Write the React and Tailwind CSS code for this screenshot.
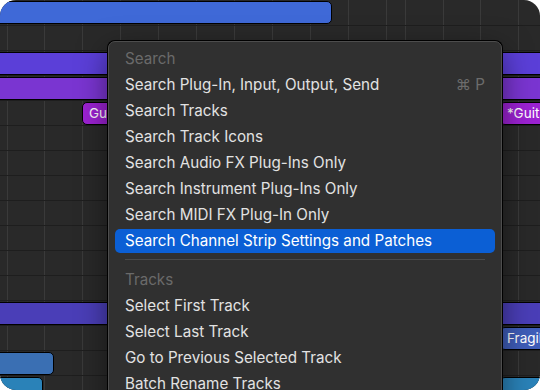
import React from "react";

const gridX = [7, 44, 82, 120, 158, 196, 234, 272, 310, 348, 386, 405, 443, 480, 518];

// regions on the timeline, one list per track row (25px each)
const rows = [
  [{ left: -12, width: 344, color: "bg-[#3f69d7]" }],
  [],
  [{ left: -12, width: 570, color: "bg-[#5b3fd8]" }],
  [{ left: -12, width: 570, color: "bg-[#7a35d1]" }],
  [
    { left: 82, width: 410, color: "bg-[#9c22d2]", label: "Guitar" },
    { left: 500, width: 80, color: "bg-[#9c22d2]", label: "*Guitar" },
  ],
  [],
  [],
  [],
  [],
  [],
  [],
  [],
  [{ left: -12, width: 570, color: "bg-[#4a3eb7]" }],
  [{ left: 500, width: 80, color: "bg-[#3f5db9]", label: "Fragile" }],
  [{ left: -12, width: 66, color: "bg-[#3a6fb3]" }],
  [
    { left: -12, width: 55, color: "bg-[#2a82b8]" },
    { left: 500, width: 80, color: "bg-[#2a82b8]" },
  ],
];

const searchItems = [
  { label: "Search Plug-In, Input, Output, Send", shortcut: "⌘ P" },
  { label: "Search Tracks" },
  { label: "Search Track Icons" },
  { label: "Search Audio FX Plug-Ins Only" },
  { label: "Search Instrument Plug-Ins Only" },
  { label: "Search MIDI FX Plug-In Only" },
  { label: "Search Channel Strip Settings and Patches", active: true },
];

const trackItems = [
  { label: "Select First Track" },
  { label: "Select Last Track" },
  { label: "Go to Previous Selected Track" },
  { label: "Batch Rename Tracks" },
];

function MenuHeader({ children }) {
  return (
    <div className="h-[26px] flex items-center px-[16px] text-[#6a6a6a]">{children}</div>
  );
}

function MenuItem({ item }) {
  return (
    <div className="h-[26px] px-[6px] py-[1px]">
      <div
        className={
          item.active
            ? "h-full flex items-center justify-between px-[10px] rounded-[5px] bg-[#0b5fd5] text-white"
            : "h-full flex items-center justify-between px-[10px] rounded-[5px] text-[#e2e2e2]"
        }
      >
        <span>{item.label}</span>
        {item.shortcut && <span className="text-[#6c6c6c]">{item.shortcut}</span>}
      </div>
    </div>
  );
}

export default function App() {
  return (
    <div className="w-[540px] h-[390px] bg-white">
      <div
        className="relative w-full h-full rounded-[16px] overflow-hidden bg-[#292929]"
        style={{ fontFamily: "Inter, 'Liberation Sans', sans-serif" }}
      >
        {/* grid lines */}
        <div className="absolute inset-0">
          {gridX.map((x) => (
            <div
              key={x}
              className="absolute top-0 bottom-0 w-px bg-[#3a3a3a]"
              style={{ left: x }}
            />
          ))}
        </div>

        {/* track lanes */}
        <div className="relative flex flex-col">
          {rows.map((regions, i) => (
            <div
              key={i}
              className={
                i === 0 ? "relative h-[25px]" : "relative h-[25px] border-t border-[#1e1e1e]"
              }
            >
              {regions.map((r, j) => (
                <div
                  key={j}
                  className={`absolute top-[1px] h-[23px] rounded-[5px] border border-black flex items-center pl-[6px] text-white text-[13.5px] whitespace-nowrap overflow-hidden ${r.color}`}
                  style={{ left: r.left, width: r.width }}
                >
                  {r.label}
                </div>
              ))}
            </div>
          ))}
        </div>

        {/* context menu */}
        <div className="absolute left-[108px] top-[41px] w-[394px] h-[380px] rounded-[7px] bg-[#303030] border border-[#4d4d4d] shadow-[0_0_0_1px_#000,0_10px_30px_rgba(0,0,0,0.5)] pt-[4px] text-[15.2px] leading-none">
          <MenuHeader>Search</MenuHeader>
          {searchItems.map((item) => (
            <MenuItem key={item.label} item={item} />
          ))}
          <div className="h-[13px] flex items-start px-[16px] pt-[5px]">
            <div className="h-px w-full bg-[#4a4a4a]" />
          </div>
          <MenuHeader>Tracks</MenuHeader>
          {trackItems.map((item) => (
            <MenuItem key={item.label} item={item} />
          ))}
        </div>
      </div>
    </div>
  );
}
